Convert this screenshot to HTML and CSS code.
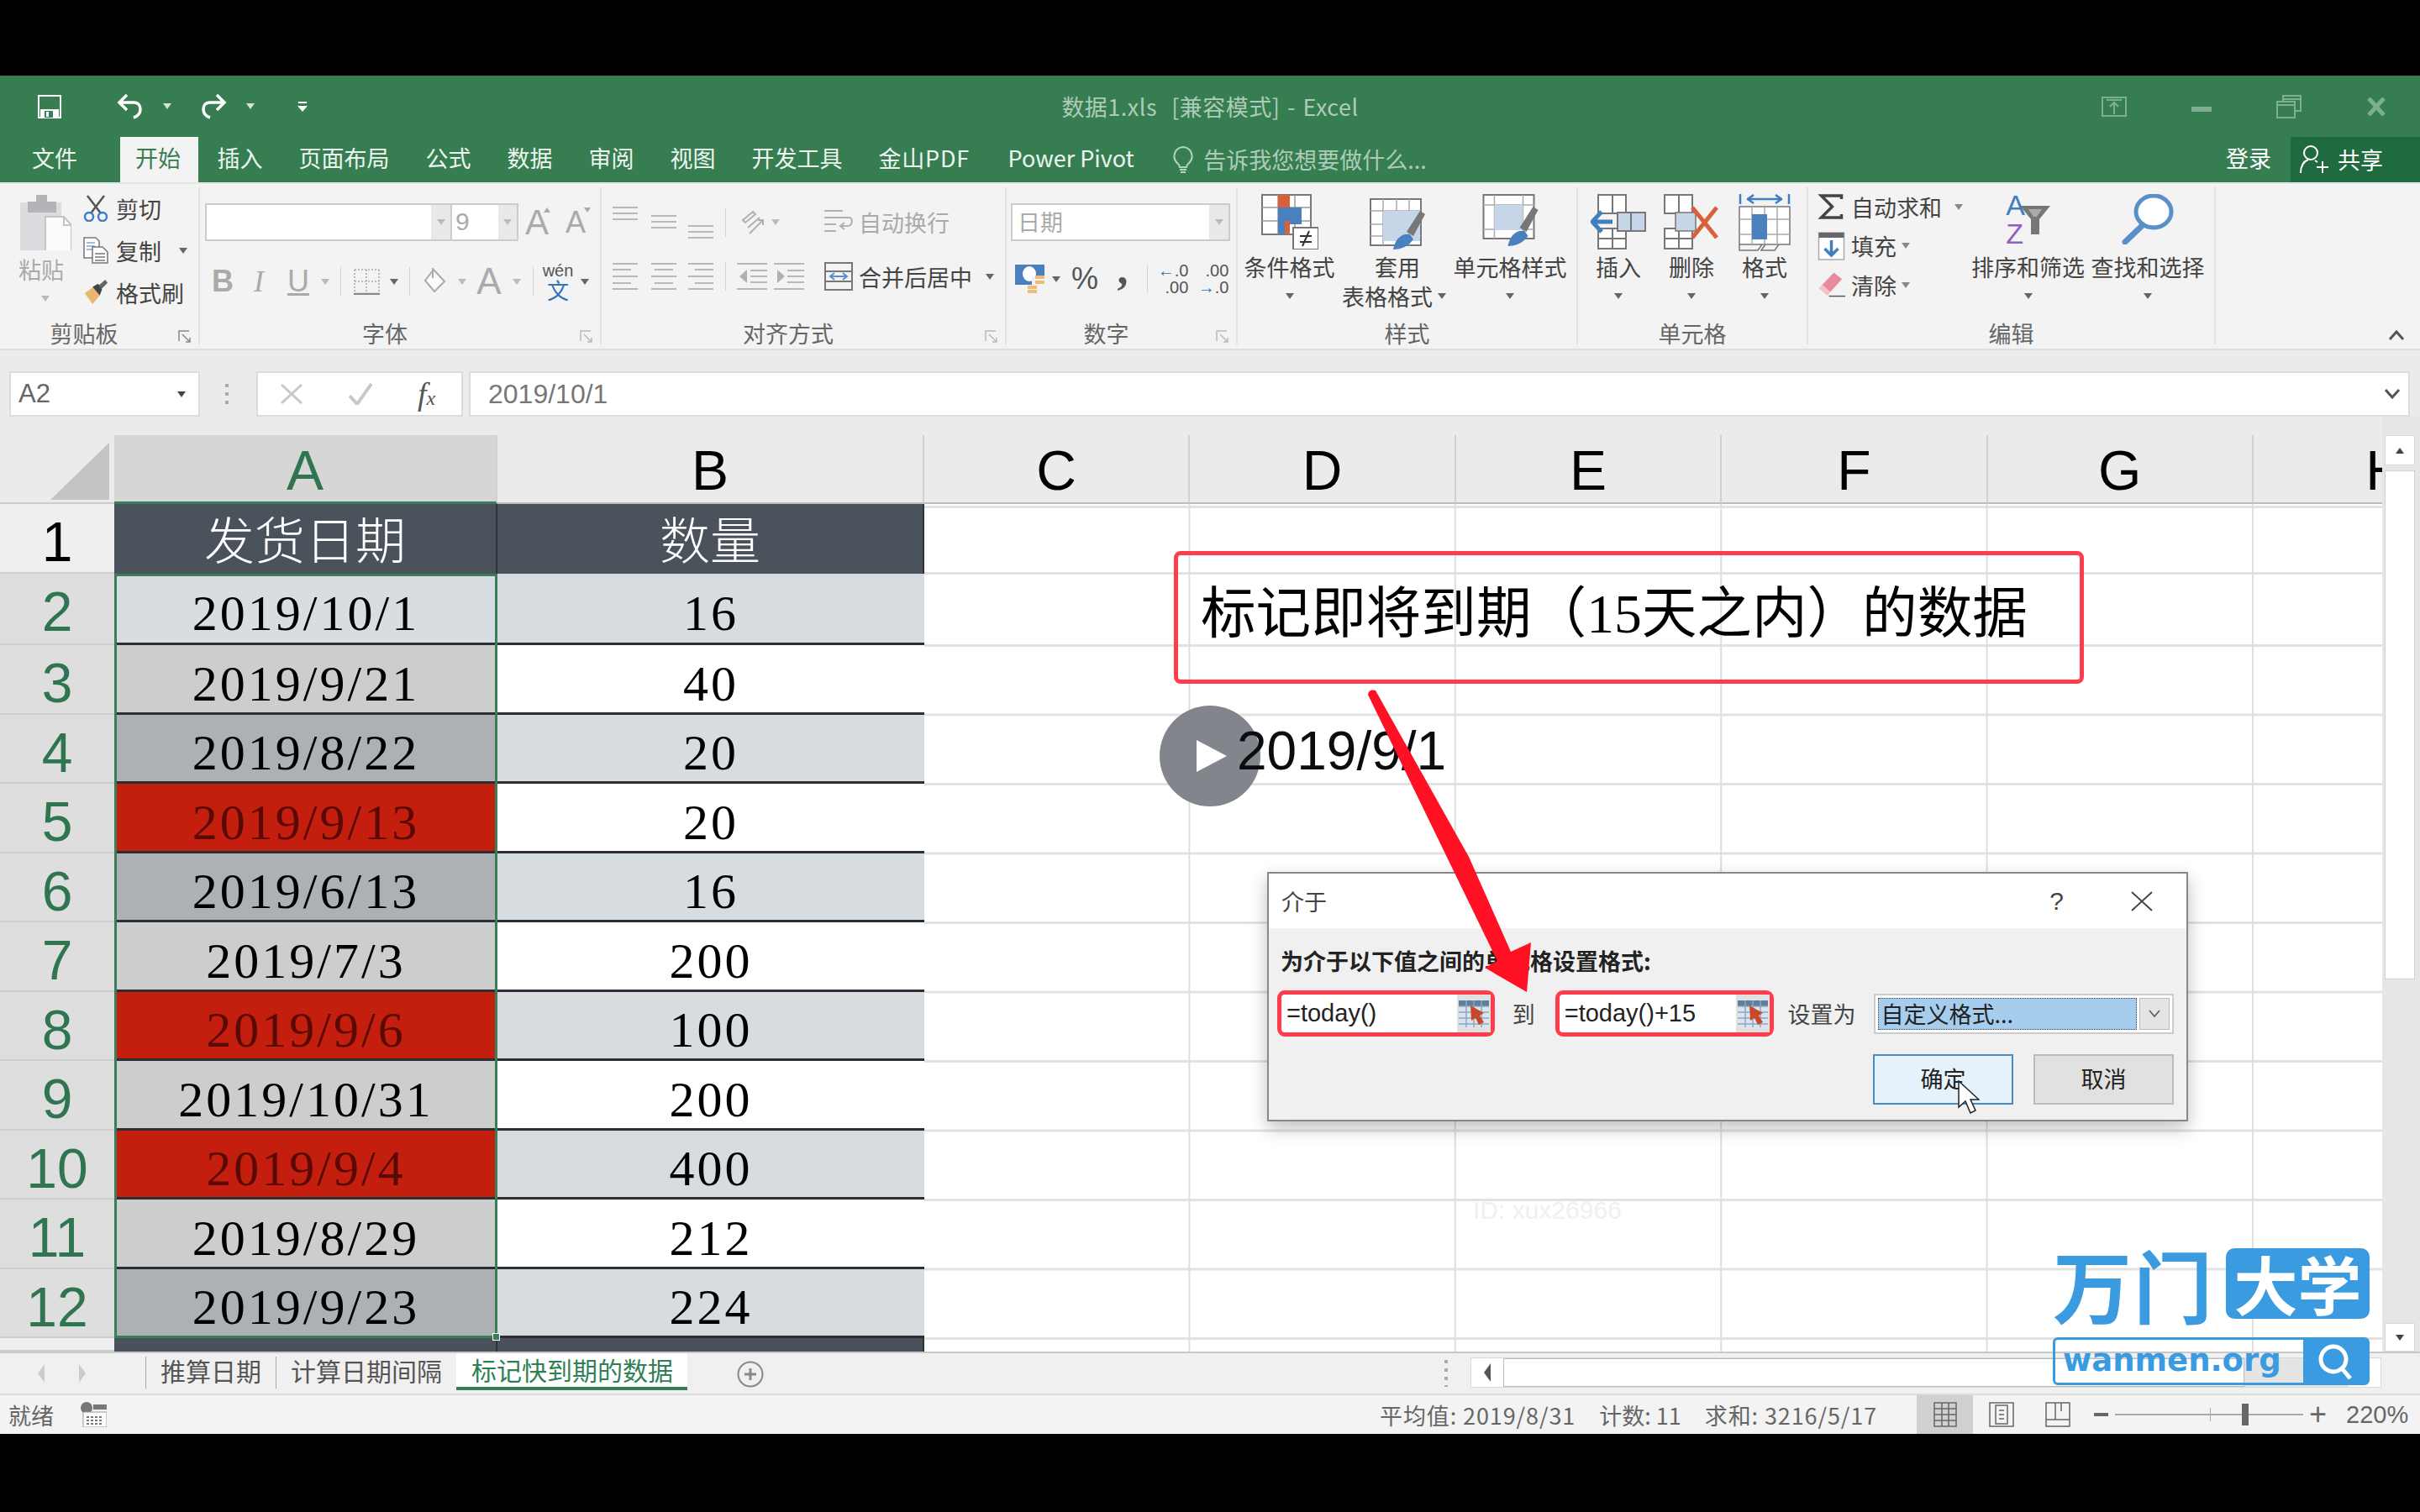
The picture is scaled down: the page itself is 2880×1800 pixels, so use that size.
FILE: index.html
```html
<!DOCTYPE html>
<html lang="zh-CN">
<head>
<meta charset="utf-8">
<title>数据1.xls [兼容模式] - Excel</title>
<link rel="stylesheet" href="styles.css">
</head>
<body>
<div class="screen">
<div class="app">

<header class="titlebar">
  <div class="title-row">
    <div class="qat">
      <svg width="28" height="28" viewBox="0 0 28 28"><path d="M1 1h26v26H1z" fill="none" stroke="#fff" stroke-width="2"/><path d="M3 17h22v9H3z" fill="#fff"/><path d="M8 19h10v8H8z" fill="#37805a"/><path d="M10 20h3v6h-3z" fill="#fff"/></svg>
      <svg class="end" width="32" height="30" viewBox="0 0 32 30"><path d="M4 10h16c6 0 8 4 8 8s-2 8-8 10" fill="none" stroke="#fff" stroke-width="3.5"/><path d="M12 1 3 10l9 9" fill="none" stroke="#fff" stroke-width="3.5"/></svg>
      <span class="caret light"></span>
      <svg class="end" width="34" height="30" viewBox="0 0 32 30"><path d="M28 10H12c-6 0-8 4-8 8s2 8 8 10" fill="none" stroke="#fff" stroke-width="3.5"/><path d="m20 1 9 9-9 9" fill="none" stroke="#fff" stroke-width="3.5"/></svg>
      <span class="caret light"></span>
      <svg width="12" height="12" viewBox="0 0 12 12"><path d="M1 0h10v2H1z" fill="#fff"/><path d="M0 5h12l-6 7z" fill="#fff"/></svg>
    </div>
    <div class="doc-title">数据1.xls&nbsp; [兼容模式] - Excel</div>
    <div class="win-btns">
      <svg width="30" height="24" viewBox="0 0 30 24"><path d="M1 1h28v22H1z" fill="none" stroke="#7fae93" stroke-width="2"/><path d="M6 4h18M15 21V7M10 12l5-5 5 5" fill="none" stroke="#7fae93" stroke-width="2"/></svg>
      <svg class="win-min" width="24" height="6" viewBox="0 0 24 6"><path d="M0 0h24v6H0z" fill="#7fae93"/></svg>
      <svg width="30" height="28" viewBox="0 0 30 28"><path d="M8 8V1h21v18h-7M1 8h21v19H1zM1 12h21M8 5h21" fill="none" stroke="#7fae93" stroke-width="2"/></svg>
      <svg width="22" height="22" viewBox="0 0 22 22"><path d="m2 1 18 20M20 1 2 21" fill="none" stroke="#7fae93" stroke-width="5"/></svg>
    </div>
  </div>
  <nav class="tab-row">
    <span class="tab file">文件</span>
    <span class="tab active">开始</span>
    <span class="tab">插入</span>
    <span class="tab">页面布局</span>
    <span class="tab">公式</span>
    <span class="tab">数据</span>
    <span class="tab">审阅</span>
    <span class="tab">视图</span>
    <span class="tab">开发工具</span>
    <span class="tab pdf">金山PDF</span>
    <span class="tab">Power Pivot</span>
    <span class="tell-me">
      <svg width="26" height="32" viewBox="0 0 26 32"><path d="M13 1a11 11 0 0 0-7 19c2 2 3 3 3 5h8c0-2 1-3 3-5A11 11 0 0 0 13 1z" fill="none" stroke="#b5d0c0" stroke-width="2"/><path d="M9 28h8M10 31h6" stroke="#b5d0c0" stroke-width="2"/></svg>
      <span>告诉我您想要做什么...</span>
    </span>
    <span class="login">登录</span>
    <span class="share">
      <svg width="35" height="36" viewBox="0 0 35 36"><circle cx="14" cy="10" r="8" fill="none" stroke="#fff" stroke-width="2"/><path d="M2 34c0-9 4-14 9-16M19 19l3 2M28 20v14M21 27h14" fill="none" stroke="#fff" stroke-width="2"/></svg>
      共享
    </span>
  </nav>
</header>

<section class="ribbon">
  <div class="group g-clip">
    <div class="group-body clip-body">
      <div class="paste">
        <svg width="61" height="66" viewBox="0 0 61 66"><path d="M0 9h49v57H0z" fill="#dcdce0"/><path d="M9 8h34v13H9zM19 0h13v9H19z" fill="#b4b4b8"/><path d="M30 26h22l9 10v31H30z" fill="#fbfbfb" stroke="#c4c4c4" stroke-width="2"/><path d="M52 26v10h9" fill="none" stroke="#c4c4c4" stroke-width="2"/></svg>
        <span class="lbl dim">粘贴</span>
        <span class="caret dimc paste-caret"></span>
      </div>
      <div class="stack clip-stack">
        <div class="stack-row"><svg class="ico-s" width="30" height="32" viewBox="0 0 30 32"><path d="M5 1l16 21M25 1 9 22" stroke="#555" stroke-width="2.5" fill="none"/><circle cx="7" cy="26" r="5" fill="none" stroke="#3f7fbf" stroke-width="2.5"/><circle cx="23" cy="26" r="5" fill="none" stroke="#3f7fbf" stroke-width="2.5"/></svg>剪切</div>
        <div class="stack-row"><svg class="ico-s" width="30" height="32" viewBox="0 0 30 32"><path d="M1 1h14l4 4v20H1z" fill="#fff" stroke="#777" stroke-width="1.5"/><path d="M4 7h10M4 11h10M4 15h10" stroke="#7fa6cf" stroke-width="1.5"/><path d="M11 12h12l6 6v13H11z" fill="#fff" stroke="#777" stroke-width="1.5"/><path d="M14 20h12M14 24h12M14 28h12" stroke="#777" stroke-width="1.5"/></svg>复制<span class="caret copy-caret"></span></div>
        <div class="stack-row"><svg class="ico-s" width="32" height="32" viewBox="0 0 32 32"><path d="M2 17 13 9l8 11-9 11z" fill="#e8b870"/><path d="M12 9l7-4 5 7-3 8z" fill="#444"/><path d="M20 7l8-7 3 4-8 8z" fill="#666"/></svg>格式刷</div>
      </div>
    </div>
    <div class="group-label with-launcher">剪贴板</div>
    <svg class="launcher" width="16" height="16" viewBox="0 0 16 16"><path d="M1 13V1h12M5 5l9 9M9 14h5V9" fill="none" stroke="#888" stroke-width="1.5"/></svg>
  </div>

  <div class="group g-font">
    <div class="group-body tool-body">
      <div class="tool-row">
        <div class="combo font-combo">
          <span class="combo-field font-name"></span><span class="combo-drop"><span class="caret dimc"></span></span>
          <span class="combo-field font-size">9</span><span class="combo-drop slim"><span class="caret dimc"></span></span>
        </div>
        <span class="az big-a">A<i class="up"></i></span>
        <span class="az small-a">A<i class="down"></i></span>
      </div>
      <div class="tool-grid font-tools">
        <span class="fmt b">B</span>
        <span class="fmt i">I</span>
        <span class="fmt u">U</span>
        <span class="caret dimc"></span>
        <span class="vsep"></span>
        <svg width="31" height="31" viewBox="0 0 31 31"><path d="M1 1h29M1 15h29M15 1v28M1 1v28M30 1v28" stroke="#aaa" stroke-width="1.5" stroke-dasharray="2 2" fill="none"/><path d="M0 30h31" stroke="#888" stroke-width="2.5"/></svg>
        <span class="caret"></span>
        <span class="vsep"></span>
        <svg width="30" height="34" viewBox="0 0 30 34"><path d="M13 3 3 16l11 13 12-12z" fill="#fbfbfb" stroke="#aaa" stroke-width="2"/><path d="M12 1v12" stroke="#aaa" stroke-width="2"/></svg>
        <span class="caret dimc"></span>
        <span class="fmt a">A</span>
        <span class="caret dimc"></span>
        <span class="vsep"></span>
        <span class="wen">wén<b>文</b></span>
        <span class="caret"></span>
      </div>
    </div>
    <div class="group-label with-launcher">字体</div>
    <svg class="launcher" width="16" height="16" viewBox="0 0 16 16"><path d="M1 13V1h12M5 5l9 9M9 14h5V9" fill="none" stroke="#bbb" stroke-width="1.5"/></svg>
  </div>

  <div class="group g-align">
    <div class="group-body tool-body">
      <div class="tool-grid align-row1">
        <svg width="30" height="40" viewBox="0 0 30 40"><path d="M0 2h30M0 9h30M0 16h30" stroke="#b8b8b8" stroke-width="2"/></svg>
        <svg width="30" height="40" viewBox="0 0 30 40"><path d="M0 12h30M0 19h30M0 26h30" stroke="#b8b8b8" stroke-width="2"/></svg>
        <svg width="30" height="40" viewBox="0 0 30 40"><path d="M0 24h30M0 31h30M0 38h30" stroke="#b8b8b8" stroke-width="2"/></svg>
        <span class="vsep"></span>
        <svg width="30" height="30" viewBox="0 0 30 30"><path d="M4 12 16 2l3 3-12 10zM10 21 24 9M12 28 28 12M22 12h6v6" fill="none" stroke="#b0b0b0" stroke-width="2"/></svg>
        <span class="caret dimc"></span>
        <span></span>
        <svg width="34" height="34" viewBox="0 0 34 34"><path d="M0 3h22M0 11h30c4 0 4 10-2 10h-8M0 19h14M0 27h14M24 17l-5 4 5 4" fill="none" stroke="#b0b0b0" stroke-width="2"/></svg>
        <span class="lbl dim row-text">自动换行</span>
      </div>
      <div class="tool-grid align-row2">
        <svg width="30" height="32" viewBox="0 0 30 32"><path d="M0 1h30M0 8h22M0 16h30M0 24h22M0 31h30" stroke="#b8b8b8" stroke-width="2"/></svg>
        <svg width="30" height="32" viewBox="0 0 30 32"><path d="M0 1h30M4 8h22M0 16h30M4 24h22M0 31h30" stroke="#b8b8b8" stroke-width="2"/></svg>
        <svg width="30" height="32" viewBox="0 0 30 32"><path d="M0 1h30M8 8h22M0 16h30M8 24h22M0 31h30" stroke="#b8b8b8" stroke-width="2"/></svg>
        <span class="vsep"></span>
        <svg width="36" height="32" viewBox="0 0 36 32"><path d="M0 1h36M16 9h20M16 16h20M16 23h20M0 31h36" stroke="#b8b8b8" stroke-width="2"/><path d="M12 8 3 16l9 8z" fill="#b0b0b0"/></svg>
        <svg width="36" height="32" viewBox="0 0 36 32"><path d="M0 1h36M16 9h20M16 16h20M16 23h20M0 31h36" stroke="#b8b8b8" stroke-width="2"/><path d="M4 8l9 8-9 8z" fill="#b0b0b0"/></svg>
        <span></span>
        <svg width="34" height="34" viewBox="0 0 34 34"><path d="M1 1h32v32H1zM1 11h32M1 23h32" fill="none" stroke="#777" stroke-width="2"/><path d="M8 17h18M12 13l-5 4 5 4M22 13l5 4-5 4" fill="none" stroke="#5b8fc7" stroke-width="2"/></svg>
        <span class="lbl row-text">合并后居中</span>
        <span class="caret merge-caret"></span>
      </div>
    </div>
    <div class="group-label with-launcher">对齐方式</div>
    <svg class="launcher" width="16" height="16" viewBox="0 0 16 16"><path d="M1 13V1h12M5 5l9 9M9 14h5V9" fill="none" stroke="#bbb" stroke-width="1.5"/></svg>
  </div>

  <div class="group g-num">
    <div class="group-body tool-body">
      <div class="tool-row">
        <div class="combo num-combo"><span class="combo-field num-name">日期</span><span class="combo-drop"><span class="caret dimc"></span></span></div>
      </div>
      <div class="tool-grid num-tools">
        <svg width="35" height="34" viewBox="0 0 35 34"><path d="M0 0h35v24H0z" fill="#4a80bd"/><ellipse cx="17" cy="11" rx="8" ry="9" fill="#fff"/><path d="M20 14h15v20H20z" fill="#f3f3f3"/><path d="M24 15h11M24 21h11M15 27h11M15 32h11" stroke="#eebc79" stroke-width="4"/></svg>
        <span class="caret"></span>
        <span class="pct">%</span>
        <span class="comma">,</span>
        <span class="vsep"></span>
        <span class="dec"><span><i class="blue">←</i>.0</span><span>.00</span></span>
        <span class="dec"><span>.00</span><span><i class="blue">→</i>.0</span></span>
      </div>
    </div>
    <div class="group-label with-launcher">数字</div>
    <svg class="launcher" width="16" height="16" viewBox="0 0 16 16"><path d="M1 13V1h12M5 5l9 9M9 14h5V9" fill="none" stroke="#bbb" stroke-width="1.5"/></svg>
  </div>

  <div class="group g-style">
    <div class="group-body big-row">
      <div class="big w123">
        <div class="big-ico"><svg width="68" height="66" viewBox="0 0 68 66"><path d="M1 1h58v47H1z" fill="#fff" stroke="#777" stroke-width="2"/><path d="M1 16h58M1 32h58M20 1v47M40 1v47" stroke="#999" stroke-width="1.5"/><path d="M20 1h14v20H20z" fill="#d9613a"/><path d="M20 16h28v20H20z" fill="#4a80bd"/><path d="M20 32h14v16H20z" fill="#d9613a"/><path d="M20 32h8v16h-8z" fill="#4a80bd"/><path d="M38 40h30v26H38z" fill="#fff" stroke="#777" stroke-width="2"/><path d="M46 50h14M46 57h14M57 44l-8 18" stroke="#333" stroke-width="2"/></svg></div>
        <div class="big-txt">条件格式</div>
        <div class="big-sub"><span class="caret"></span></div>
      </div>
      <div class="big w134">
        <div class="big-ico"><svg width="66" height="66" viewBox="0 0 66 66"><path d="M1 6h60v55H1z" fill="#fff" stroke="#777" stroke-width="2"/><path d="M1 20h60M1 36h60M1 50h60M16 6v55M32 6v55M47 6v55" stroke="#aaa" stroke-width="1.5"/><path d="M16 20h44v36H16z" fill="#c7d5e8"/><path d="M44 45 60 20l6 4-14 26z" fill="#777"/><path d="M28 66c2-12 10-20 20-18l4 6c-6 8-14 12-24 12z" fill="#4a80bd"/></svg></div>
        <div class="big-txt">套用</div>
        <div class="big-sub nudge">表格格式<span class="caret sub-caret"></span></div>
      </div>
      <div class="big w134">
        <div class="big-ico"><svg width="67" height="66" viewBox="0 0 66 66"><path d="M1 1h60v52H1z" fill="#fff" stroke="#777" stroke-width="2"/><path d="M1 13h60M14 1v52M48 1v52M1 42h60" stroke="#aaa" stroke-width="1.5"/><path d="M14 13h34v30H14z" fill="#c7d5e8"/><path d="M44 40 60 15l6 4-14 26z" fill="#777"/><path d="M30 62c2-12 10-20 20-18l4 6c-6 8-14 12-24 12z" fill="#4a80bd"/></svg></div>
        <div class="big-txt">单元格样式</div>
        <div class="big-sub"><span class="caret"></span></div>
      </div>
    </div>
    <div class="group-label">样式</div>
  </div>

  <div class="group g-cells">
    <div class="group-body big-row cells-body">
      <div class="big w88">
        <div class="big-ico"><svg width="66" height="66" viewBox="0 0 66 66"><path d="M9 1h33v22H9zM26 1v22M9 41h33v24H9zM26 41v24M9 53h33" fill="#fff" stroke="#777" stroke-width="2"/><path d="M32 22h33v22H32zM48 22v22" fill="#c7d5e8" stroke="#777" stroke-width="2"/><path d="M26 33H4M13 21 2 33l11 12" fill="none" stroke="#3f7fbf" stroke-width="5"/></svg></div>
        <div class="big-txt">插入</div>
        <div class="big-sub"><span class="caret"></span></div>
      </div>
      <div class="big w86">
        <div class="big-ico"><svg width="66" height="66" viewBox="0 0 66 66"><path d="M1 1h33v22H1zM18 1v22M1 41h33v24H1zM18 41v24M1 53h33" fill="#fff" stroke="#777" stroke-width="2"/><path d="M14 22h24v22H14z" fill="#c7d5e8" stroke="#777" stroke-width="1.5"/><path d="M63 16 34 52M34 16l29 36" fill="none" stroke="#d9613a" stroke-width="5"/></svg></div>
        <div class="big-txt">删除</div>
        <div class="big-sub"><span class="caret"></span></div>
      </div>
      <div class="big w88">
        <div class="big-ico"><svg width="62" height="68" viewBox="0 0 62 68"><path d="M2 0v12M60 0v12M10 6h42M18 1l-7 5 7 5M44 1l7 5-7 5" fill="none" stroke="#3f7fbf" stroke-width="2.5"/><path d="M1 15h60v45H1z" fill="#fff" stroke="#777" stroke-width="1.5"/><path d="M16 15v45M46 15v45M1 30h60M1 48h60M31 15v45" stroke="#aaa" stroke-width="1.5"/><path d="M16 24h18v30H16z" fill="#4a80bd"/><path d="M1 60v7h22l5-7M32 60l-5 7h16l5-7" fill="none" stroke="#777" stroke-width="1.5"/></svg></div>
        <div class="big-txt">格式</div>
        <div class="big-sub"><span class="caret"></span></div>
      </div>
    </div>
    <div class="group-label">单元格</div>
  </div>

  <div class="group g-edit">
    <div class="group-body big-row">
      <div class="stack edit-stack">
        <div class="edit-row"><svg class="edit-ico" width="30" height="30" viewBox="0 0 30 30"><path d="M27 6V2H3l13 13L3 28h24v-4" fill="none" stroke="#444" stroke-width="3.5"/></svg>自动求和<span class="caret sum-caret dimc2"></span></div>
        <div class="edit-row"><svg class="edit-ico" width="32" height="34" viewBox="0 0 32 34"><path d="M1 1h30v32H1z" fill="#fff" stroke="#aaa" stroke-width="1.5"/><path d="M1 1h30v6H1z" fill="#666"/><path d="M16 10v18M8 20l8 8 8-8" fill="none" stroke="#3f7fbf" stroke-width="3.5"/></svg>填充<span class="caret dimc2 fill-caret"></span></div>
        <div class="edit-row"><svg class="edit-ico" width="34" height="30" viewBox="0 0 34 30"><path d="M2 19 20 0l10 8-18 20z" fill="#e88b9d"/><path d="M2 19l10 9 4-4-10-9z" fill="#f6c3cc"/><path d="M14 29h20" stroke="#555" stroke-width="1.5"/></svg>清除<span class="caret dimc2 fill-caret"></span></div>
      </div>
      <div class="big w141">
        <div class="big-ico sort-ico"><span class="az-sort"><i class="sa">A</i><i class="sz">Z</i></span><svg class="funnel" width="36" height="34" viewBox="0 0 36 34"><path d="M0 0h36L23 16v18h-10V16z" fill="#777"/><path d="M10 4h16L20 13h-4z" fill="#aaa"/></svg></div>
        <div class="big-txt">排序和筛选</div>
        <div class="big-sub"><span class="caret"></span></div>
      </div>
      <div class="big w144">
        <div class="big-ico"><svg width="62" height="60" viewBox="0 0 62 60"><ellipse cx="38" cy="21" rx="21" ry="19" fill="#fff" stroke="#5b8fc7" stroke-width="5"/><path d="M25 37 4 57" stroke="#5b8fc7" stroke-width="7" stroke-linecap="round"/></svg></div>
        <div class="big-txt">查找和选择</div>
        <div class="big-sub"><span class="caret"></span></div>
      </div>
    </div>
    <div class="group-label">编辑</div>
  </div>

  <div class="ribbon-end">
    <svg width="19" height="12" viewBox="0 0 19 12"><path d="m1 11 8-9 8 9" fill="none" stroke="#555" stroke-width="3"/></svg>
  </div>
</section>

<section class="formula">
  <div class="namebox"><span>A2</span><span class="caret dark"></span></div>
  <div class="fdots"></div>
  <div class="fx-box">
    <svg width="26" height="24" viewBox="0 0 26 24"><path d="m1 1 24 22M25 1 1 23" stroke="#c8c8c8" stroke-width="3"/></svg>
    <svg width="28" height="26" viewBox="0 0 28 26"><path d="m1 15 9 10L27 1" fill="none" stroke="#c8c8c8" stroke-width="4"/></svg>
    <span class="fx">f<small>x</small></span>
  </div>
  <div class="finput"><span>2019/10/1</span><svg width="19" height="12" viewBox="0 0 19 12"><path d="m1 1 8 9 8-9" fill="none" stroke="#555" stroke-width="3"/></svg></div>
</section>

<section class="sheet">
  <div class="grid-wrap">
    <div class="grid">
      <div class="corner"><svg width="70" height="68" viewBox="0 0 70 68"><path d="M70 0v68H0z" fill="#c4c4c4"/></svg></div>
      <div class="ch sel">A</div><div class="ch">B</div><div class="ch">C</div><div class="ch">D</div><div class="ch">E</div><div class="ch">F</div><div class="ch">G</div><div class="ch">H</div>

      <div class="rh top">1</div><div class="thd">发货日期</div><div class="thd">数量</div>
      <div class="rh">2</div><div class="td a-active">2019/10/1</div><div class="td b-band">16</div>
      <div class="rh">3</div><div class="td a-light">2019/9/21</div><div class="td b-white">40</div>
      <div class="rh">4</div><div class="td a-dark">2019/8/22</div><div class="td b-band">20</div>
      <div class="rh">5</div><div class="td a-red">2019/9/13</div><div class="td b-white">20</div>
      <div class="rh">6</div><div class="td a-dark">2019/6/13</div><div class="td b-band">16</div>
      <div class="rh">7</div><div class="td a-light">2019/7/3</div><div class="td b-white">200</div>
      <div class="rh">8</div><div class="td a-red">2019/9/6</div><div class="td b-band">100</div>
      <div class="rh">9</div><div class="td a-light">2019/10/31</div><div class="td b-white">200</div>
      <div class="rh">10</div><div class="td a-red">2019/9/4</div><div class="td b-band">400</div>
      <div class="rh">11</div><div class="td a-light">2019/8/29</div><div class="td b-white">212</div>
      <div class="rh">12</div><div class="td a-dark">2019/9/23</div><div class="td b-band">224</div>
      <div class="rh top"></div><div class="tfoot"></div><div class="tfoot"></div>

      <div class="selection"><span class="handle"></span></div>
    </div>
  </div>
  <div class="vscroll">
    <div class="sb-btn"><span class="caret dark up-caret"></span></div>
    <div class="sb-thumb"></div>
    <div class="sb-btn end"><span class="caret dark"></span></div>
  </div>
</section>

<section class="sheetbar">
  <div class="sheet-nav"><i class="nav-l"></i><i class="nav-r"></i></div>
  <span class="s-tab first">推算日期</span>
  <span class="s-tab">计算日期间隔</span>
  <span class="s-tab current">标记快到期的数据</span>
  <svg class="s-add" width="32" height="32" viewBox="0 0 32 32"><circle cx="16" cy="16" r="14.5" fill="none" stroke="#888" stroke-width="2"/><path d="M16 9v14M9 16h14" stroke="#888" stroke-width="3"/></svg>
  <div class="s-dots"></div>
  <div class="hscroll">
    <div class="hs-btn"><i class="nav-l dark"></i></div>
    <div class="hs-thumb"></div>
    <div class="hs-btn right"><i class="nav-r dark"></i></div>
  </div>
</section>

<footer class="status">
  <span class="ready">就绪</span>
  <svg width="32" height="30" viewBox="0 0 32 30"><circle cx="8" cy="7" r="7" fill="#777"/><path d="M16 3h16v6H16z" fill="#777"/><path d="M4 12h28v18H4z" fill="#fff" stroke="#999"/><path d="M8 18h20M8 22h20M8 26h20" stroke="#777" stroke-width="2" stroke-dasharray="3 2"/></svg>
  <div class="stats"><span>平均值: 2019/8/31</span><span class="stat-count">计数: 11</span><span>求和: 3216/5/17</span></div>
  <div class="view-btns">
    <span class="vb on"><svg width="28" height="30" viewBox="0 0 28 30"><path d="M1 1h26v28H1zM1 8h26M1 15h26M1 22h26M10 1v28M18 1v28" fill="none" stroke="#666" stroke-width="1.5"/></svg></span>
    <span class="vb"><svg width="30" height="30" viewBox="0 0 30 30"><path d="M1 1h28v28H1z" fill="none" stroke="#666" stroke-width="1.5"/><path d="M8 4h14v22H8zM12 10h6M12 15h6M12 20h6" fill="none" stroke="#666" stroke-width="1.5"/></svg></span>
    <span class="vb"><svg width="30" height="30" viewBox="0 0 30 30"><path d="M1 1h28v28H1zM1 21h28M12 1v20M19 1v10" fill="none" stroke="#666" stroke-width="1.5"/></svg></span>
  </div>
  <div class="zoom-ctl">
    <i class="z-minus"></i>
    <div class="z-track"><i class="z-tick"></i><i class="z-thumb"></i></div>
    <span class="z-plus">+</span>
    <span class="z-val">220%</span>
  </div>
</footer>
</div>

<div class="note-text">2019/9/1</div>
<div class="play"><svg width="36" height="38" viewBox="0 0 36 38"><path d="M0 0l36 19L0 38z" fill="#fff"/></svg></div>
<div class="note-box">标记即将到期（15天之内）的数据</div>
<div class="watermark">ID: xux26966</div>

<div class="dialog">
  <div class="dlg-title"><span>介于</span><span class="dlg-help">?</span>
    <svg width="26" height="24" viewBox="0 0 26 24"><path d="m1 1 24 22M25 1 1 23" stroke="#444" stroke-width="2"/></svg>
  </div>
  <div class="dlg-body">
    <div class="dlg-label">为介于以下值之间的单元格设置格式:</div>
    <div class="dlg-row">
      <div class="ref-box first">
        <span class="ref-text">=today()</span>
        <span class="ref-btn"><svg width="36" height="32" viewBox="0 0 36 32"><path d="M0 0h36v32H0z" fill="#dbe4ee"/><path d="M0 0h36v7H0z" fill="#5f7f9f"/><path d="M0 7h36M0 14h36M0 21h36M0 28h36M9 0v32M18 0v32M27 0v32" stroke="#8fa7bf" stroke-width="1.5"/><path d="M14 6l16 9-5 3 5 8-6 3-4-8-5 3z" fill="#c8492a"/></svg></span>
      </div>
      <span class="dlg-to">到</span>
      <div class="ref-box second">
        <span class="ref-text">=today()+15</span>
        <span class="ref-btn"><svg width="36" height="32" viewBox="0 0 36 32"><path d="M0 0h36v32H0z" fill="#dbe4ee"/><path d="M0 0h36v7H0z" fill="#5f7f9f"/><path d="M0 7h36M0 14h36M0 21h36M0 28h36M9 0v32M18 0v32M27 0v32" stroke="#8fa7bf" stroke-width="1.5"/><path d="M14 6l16 9-5 3 5 8-6 3-4-8-5 3z" fill="#c8492a"/></svg></span>
      </div>
      <span class="dlg-set">设置为</span>
      <div class="dlg-select">
        <span class="sel-text">自定义格式...</span>
        <span class="sel-drop"><svg width="14" height="10" viewBox="0 0 14 10"><path d="m1 1 6 7 6-7" fill="none" stroke="#555" stroke-width="1.5"/></svg></span>
      </div>
    </div>
    <div class="dlg-actions">
      <span class="btn primary">确定</span>
      <span class="btn">取消</span>
    </div>
  </div>
</div>

<svg class="red-arrow" width="240" height="400" viewBox="1600 800 240 400"><path d="M1628 827q1-7 9-5L1748 1020 1798 1133l24-11-5 59-50-29 15-8z" fill="#ff1023"/></svg>
<svg class="cursor" width="26" height="40" viewBox="0 0 26 40"><path d="M1 1v31l8-7 6 14 6-3-6-13h10z" fill="#fff" stroke="#222" stroke-width="1.5"/></svg>

<div class="logo">
  <div class="logo-top"><span class="logo-wm">万门</span><span class="logo-uni">大学</span></div>
  <div class="logo-search"><span class="logo-url">wanmen.org</span><span class="logo-btn"><svg width="42" height="44" viewBox="0 0 42 44"><circle cx="19" cy="19" r="15" fill="none" stroke="#fff" stroke-width="5"/><path d="m29 30 10 12" stroke="#fff" stroke-width="5"/></svg></span></div>
</div>
</div>
</body>
</html>
```

FILE: styles.css
```css
* { box-sizing: border-box; }
html, body { margin: 0; padding: 0; background: #000; }
body {
  font-family: "Noto Sans CJK SC", "Liberation Sans", sans-serif;
  font-size: 27px;
  color: #444;
  overflow: hidden;
}
svg { display: block; flex: none; }
i { font-style: normal; }
.screen { position: relative; width: 2880px; height: 1800px; padding-top: 90px; overflow: hidden; }
.app { width: 2880px; display: flex; flex-direction: column; }

/* carets */
.caret { display: inline-block; width: 0; height: 0; border-left: 5px solid transparent; border-right: 5px solid transparent; border-top: 7px solid #666; flex: none; }
.caret.light { border-top-color: #d5e3da; }
.caret.dimc { border-top-color: #bbb; }
.caret.dimc2 { border-top-color: #888; }
.caret.dark { border-top-color: #444; }

/* title bar */
.titlebar { background: #367e52; height: 127px; display: flex; flex-direction: column; }
.title-row { height: 73px; display: grid; grid-template-columns: 1fr auto 1fr; align-items: center; }
.qat { display: grid; grid-template-columns: 28px 98px 56px 44px 54px 70px; align-items: center; justify-items: center; padding-left: 45px; justify-self: start; }
.qat .end { justify-self: end; }
.doc-title { color: #aecbb9; line-height: 30px; word-spacing: 2px; letter-spacing: .5px; }
.win-btns { display: grid; grid-template-columns: repeat(4, 104px); justify-items: center; align-items: center; justify-self: end; }
.win-min { margin-top: 6px; }
.tab-row { display: flex; height: 54px; align-items: stretch; color: #eef5f0; line-height: 50px; }
.tab { padding: 0 21.5px; white-space: nowrap; }
.tab.file { padding: 0 47px 0 38px; margin-right: 4px; }
.tab.active { background: #f3f3f3; color: #367e52; padding: 0 21px 0 18px; margin-right: 1px; }
.tab.pdf { letter-spacing: .8px; padding-right: 24px; }
.tell-me { display: flex; align-items: center; gap: 11px; margin-left: 24px; color: #aecbb9; white-space: nowrap; }
.login { margin-left: auto; padding-right: 23px; color: #fff; }
.share { width: 154px; background: #1f6a3f; color: #fff; display: flex; align-items: center; gap: 11px; padding-left: 10px; }

/* ribbon */
.ribbon { height: 200px; background: #f3f3f3; border-top: 2px solid #dfe8e2; border-bottom: 2px solid #dedede; display: flex; padding-top: 4px; }
.group { position: relative; height: 187px; border-right: 2px solid #e2e2e2; display: flex; flex-direction: column; flex: none; }
.group-body { height: 162px; }
.group-label { height: 25px; line-height: 24px; text-align: center; color: #666; }
.group-label.with-launcher { padding-right: 36px; }
.launcher { position: absolute; right: 8px; top: 170px; }
.g-clip { width: 238px; }
.g-font { width: 478px; }
.g-align { width: 482px; }
.g-num { width: 275px; }
.g-style { width: 405px; }
.g-cells { width: 274px; }
.g-edit { width: 485px; }
.ribbon-end { flex: 1; display: flex; justify-content: flex-end; align-items: flex-end; padding: 0 18px 5px 0; height: 187px; }

.clip-body { display: flex; padding-left: 22px; }
.paste { width: 77px; padding-top: 9px; display: flex; flex-direction: column; align-items: flex-start; }
.paste svg { margin-left: 2px; }
.lbl { line-height: 27px; white-space: nowrap; }
.lbl.dim { color: #aaa; }
.paste .lbl { margin-top: 9px; }
.paste-caret { margin: 18px 0 0 27px; }
.stack { display: flex; flex-direction: column; }
.stack-row { height: 50px; display: flex; align-items: center; gap: 9px; white-space: nowrap; }
.ico-s { width: 30px; }
.copy-caret { margin-left: 12px; }

.tool-body { display: flex; flex-direction: column; padding-top: 19px; }
.tool-row { height: 45px; display: flex; align-items: center; margin-left: 6px; }
.tool-grid { display: grid; align-items: center; justify-items: center; justify-content: start; height: 34px; margin-top: 25px; }
.combo { display: flex; height: 45px; border: 2px solid #ccc; background: #fff; align-items: stretch; }
.font-combo { width: 373px; }
.combo-field { display: block; color: #aaa; line-height: 40px; }
.font-name { width: 267px; }
.font-size { width: 57px; padding-left: 4px; background: #fff; border-left: 2px solid #ccc; font-family: "Liberation Sans", sans-serif; font-size: 30px; }
.combo-drop { width: 23px; background: #e9e9e9; display: flex; align-items: center; justify-content: center; }
.combo-drop.slim { width: 22px; }
.az { position: relative; display: block; font-family: "Liberation Sans", sans-serif; color: #aaa; line-height: 36px; }
.big-a { font-size: 42px; margin-left: 8px; width: 48px; }
.small-a { font-size: 36px; width: 30px; }
.az i { position: absolute; top: 0; width: 0; height: 0; border-left: 4px solid transparent; border-right: 4px solid transparent; }
.az .up { left: 22px; border-bottom: 6px solid #aaa; }
.az .down { left: 22px; top: 0; border-top: 6px solid #aaa; }
.font-tools { margin-left: 6px; grid-template-columns: 42px 44px 50px 14px 22px 40px 26px 10px 52px 12px 52px 14px 24px 36px 28px; }
.fmt { font-family: "Liberation Sans", sans-serif; font-size: 36px; color: #aaa; line-height: 34px; }
.fmt.b { font-weight: 700; }
.fmt.i { font-style: italic; font-family: "Liberation Serif", serif; }
.fmt.u { text-decoration: underline; text-underline-offset: 2px; }
.fmt.a { font-size: 44px; }
.vsep { width: 1px; height: 34px; background: #d4d4d4; }
.wen { display: flex; flex-direction: column; align-items: center; font-family: "Liberation Sans", sans-serif; font-size: 20px; line-height: 20px; color: #555; }
.wen b { font-family: "Noto Sans CJK SC", sans-serif; font-weight: 400; font-size: 26px; line-height: 26px; color: #2f74b5; }

.align-row1 { grid-template-columns: 44px 48px 40px 18px 46px 10px 52px 36px auto; margin: 0 0 0 6px; height: 45px; }
.align-row2 { grid-template-columns: 44px 48px 40px 18px 46px 42px 20px 36px auto auto; margin: 25px 0 0 6px; }
.row-text { margin-left: 6px; }
.merge-caret { margin-left: 16px; }

.num-combo { width: 261px; margin-left: -1px; }
.num-name { flex: 1; padding-left: 6px; }
.num-tools { margin-left: 5px; grid-template-columns: 44px 20px 48px 42px 16px 46px 50px; }
.pct { font-family: "Liberation Sans", sans-serif; font-size: 36px; color: #555; line-height: 34px; }
.comma { font-family: "Liberation Serif", serif; font-weight: 700; font-size: 52px; line-height: 34px; color: #555; margin-top: -22px; }
.dec { display: flex; flex-direction: column; font-family: "Liberation Sans", sans-serif; font-size: 20px; line-height: 20px; color: #555; text-align: right; }
.blue { color: #2f74b5; font-weight: 700; }

.big-row { display: flex; }
.big { display: flex; flex-direction: column; align-items: center; flex: none; white-space: nowrap; }
.w123 { width: 123px; } .w134 { width: 134px; } .w88 { width: 88px; } .w86 { width: 86px; } .w141 { width: 141px; } .w144 { width: 144px; }
.big-ico { height: 81px; padding-top: 8px; display: flex; justify-content: center; }
.big-txt { height: 27px; line-height: 27px; }
.big-sub { height: 27px; line-height: 27px; margin-top: 8px; display: flex; align-items: center; }
.big-sub.nudge { margin-right: 8px; }
.sub-caret { margin-left: 6px; }
.cells-body { padding-left: 4px; }
.edit-stack { width: 191px; padding: 0 0 0 11px; }
.edit-row { height: 46.5px; display: flex; align-items: center; white-space: nowrap; }
.edit-ico { margin-right: 7px; width: 33px; }
.sum-caret { margin-left: 15px; }
.fill-caret { margin-left: 6px; }
.az-sort { display: flex; flex-direction: column; font-family: "Liberation Sans", sans-serif; font-size: 34px; line-height: 34px; margin: -4px -6px 0 0; }
.funnel { margin-top: 14px; }
.sa { color: #3f7fbf; }
.sz { color: #9060c0; }

/* formula bar */
.formula { height: 79px; background: #ebebeb; display: flex; padding: 25px 12px 0 11px; align-items: flex-start; }
.namebox { width: 227px; height: 54px; background: #fff; border: 2px solid #dcdcdc; display: flex; align-items: center; justify-content: space-between; padding: 0 15px 0 9px; color: #666; font-family: "Liberation Sans", sans-serif; font-size: 31px; }
.fdots { width: 4px; height: 24px; margin: 15px 33px 0 30px; background: repeating-linear-gradient(to bottom, #aaa 0 4px, transparent 4px 10px); }
.fx-box { width: 246px; height: 54px; background: #fff; border: 2px solid #dcdcdc; display: flex; align-items: center; padding-left: 27px; }
.fx-box svg:nth-child(2) { margin-left: 55px; }
.fx { margin-left: 54px; font-family: "Liberation Serif", serif; font-style: italic; font-size: 38px; color: #555; }
.fx small { font-size: 24px; }
.finput { flex: 1; margin-left: 7px; height: 54px; background: #fff; border: 2px solid #dcdcdc; display: flex; align-items: center; justify-content: space-between; padding: 0 9px 0 21px; font-family: "Liberation Sans", sans-serif; font-size: 32px; color: #777; }

/* sheet */
.sheet { height: 1113px; display: flex; background: #ebebeb; }
.grid-wrap { width: 2835px; padding-top: 22px; overflow: hidden; flex: none; }
.grid {
  position: relative;
  width: 2835px;
  height: 1091px;
  display: grid;
  grid-template-columns: 136px 456px 508px repeat(6, 316.4px);
  grid-template-rows: 82px 83px 85px repeat(10, 82.5px) 1fr;
  background-color: #fff;
  background-image:
    linear-gradient(to right, #dedede 2px, transparent 2px),
    linear-gradient(to bottom, #e2e2e2 3px, transparent 3px),
    linear-gradient(#fff, #fff),
    linear-gradient(to bottom, #e2e2e2 3px, transparent 3px);
  background-size: 316.4px 100%, 100% 3px, 100% 7px, 100% 82.5px;
  background-repeat: repeat, no-repeat, no-repeat, repeat;
  background-position: 1098px 0, 0 163px, 0 166px, 0 166.5px;
}
.corner { background: #ebebeb; padding: 9px 0 0 60px; border-bottom: 2px solid #ccc; }
.ch { background: #ebebeb; border-right: 2px solid #d0d0d0; border-bottom: 2px solid #bdbdbd; color: #000; font-family: "Liberation Sans", sans-serif; font-size: 66px; line-height: 85px; text-align: center; }
.ch.sel { background: #d6d6d6; color: #2f7550; border-bottom: 3px solid #3a7d58; }
.ch:last-child { border-right: 0; }
.rh { grid-column: 1; background: #dedede; border-bottom: 2px solid #cfcfcf; color: #2f7550; font-family: "Liberation Sans", sans-serif; font-size: 66px; line-height: 90px; text-align: center; }
.rh.top { background: #efefef; color: #000; }
.thd { background: #4a525c; color: #fff; font-size: 60px; line-height: 92px; text-align: center; border-right: 2px solid #2e333a; font-family: "Liberation Serif", "Noto Sans CJK SC", serif; font-weight: 300; }
.td { display: flex; align-items: center; justify-content: center; padding-top: 13px; border-bottom: 3px solid #2b2e33; color: #000; font-family: "Liberation Serif", serif; font-size: 60px; letter-spacing: 3px; }
.a-active { background: #d8dde2; }
.a-light { background: #cdcdcd; }
.a-dark { background: #aeb1b4; }
.a-red { background: #c41e0f; color: #5a0905; }
.b-band { background: #d7dce1; }
.b-white { background: #fff; }
.tfoot { background: #4a515b; border-right: 2px solid #2e333a; }
.selection { position: absolute; left: 136px; top: 165px; width: 456px; height: 910px; border: 3px solid #3a7d58; pointer-events: none; }
.handle { position: absolute; right: -6px; bottom: -6px; width: 9px; height: 9px; background: #3a7d58; border: 1px solid #fff; }

.vscroll { flex: 1; padding: 22px 6px 0 3px; background: #e6e6e6; display: flex; flex-direction: column; }
.sb-btn { height: 36px; background: #fff; border: 1px solid #d8d8d8; display: flex; align-items: center; justify-content: center; flex: none; }
.sb-btn.end { margin-top: auto; height: 34px; }
.up-caret { transform: rotate(180deg); }
.sb-thumb { height: 606px; margin-top: 6px; background: #fff; border: 1px solid #d0d0d0; }

/* sheet tabs */
.sheetbar { height: 50px; background: #f0f0f0; border-top: 2px solid #c8c8c8; display: flex; align-items: flex-start; position: relative; }
.sheet-nav { width: 173px; height: 48px; display: flex; align-items: center; padding-left: 45px; gap: 41px; }
.nav-l, .nav-r { display: block; width: 0; height: 0; border-top: 11px solid transparent; border-bottom: 11px solid transparent; }
.nav-l { border-right: 8px solid #ccc; }
.nav-r { border-left: 8px solid #ccc; }
.nav-l.dark { border-right-color: #555; }
.nav-r.dark { border-left-color: #555; }
.s-tab { font-size: 30px; line-height: 32px; height: 38px; margin-top: 4px; color: #555; white-space: nowrap; padding: 0 17px; border-left: 1px solid #aaa; }
.s-tab.current { background: #fff; color: #2f7f55; border-left: 0; height: 44px; margin-top: 0; border-bottom: 4px solid #367e52; padding: 0 17px 0 18px; line-height: 38px; }
.s-add { margin: 9px 0 0 59px; }
.s-dots { width: 4px; height: 32px; margin: 8px 0 0 810px; background: repeating-linear-gradient(to bottom, #aaa 0 4px, transparent 4px 10px); }
.hscroll { width: 1084px; height: 36px; margin: 5px 0 0 27px; display: flex; background: #e4e4e4; border: 1px solid #d8d8d8; flex: none; }
.hs-btn { width: 38px; height: 100%; background: #fff; display: flex; align-items: center; justify-content: center; flex: none; }
.hs-btn.right { margin-left: auto; }
.hs-thumb { width: 882px; background: #fff; border: 1px solid #bbb; }

/* status */
.status { height: 48px; background: #f3f3f3; border-top: 2px solid #dcdcdc; display: flex; align-items: center; color: #666; padding-left: 10px; position: relative; }
.ready { width: 85px; }
.stats { margin-left: 1515px; display: flex; gap: 28px; width: 639px; white-space: nowrap; font-size: 27px; letter-spacing: .9px; }
.stat-count { letter-spacing: 0; }
.view-btns { display: flex; height: 46px; }
.vb { width: 67px; height: 46px; display: flex; align-items: center; justify-content: center; }
.vb.on { background: #d0d0d0; }
.zoom-ctl { display: flex; align-items: center; height: 46px; margin-left: 10px; }
.z-minus { display: block; width: 17px; height: 4px; background: #666; }
.z-track { position: relative; width: 224px; height: 2px; margin-left: 8px; background: #aaa; }
.z-tick { position: absolute; left: 113px; top: -7px; width: 1px; height: 16px; background: #aaa; }
.z-thumb { position: absolute; left: 151px; top: -12px; width: 8px; height: 26px; background: #666; }
.z-plus { margin-left: 7px; font-family: "Liberation Sans", sans-serif; font-size: 36px; line-height: 40px; color: #666; }
.z-val { margin-left: 23px; font-family: "Liberation Sans", sans-serif; font-size: 29px; white-space: nowrap; }

/* overlays on the sheet */
.note-box { position: absolute; left: 1397px; top: 656px; width: 1083px; height: 158px; border: 5px solid #ff3c4c; border-radius: 8px; padding: 30px 0 0 27px; font-family: "Liberation Serif", "Noto Sans CJK SC", serif; font-size: 65.6px; line-height: 80px; color: #000; white-space: nowrap; }
.play { position: absolute; left: 1380px; top: 840px; width: 120px; height: 120px; border-radius: 50%; background: #82868c; display: flex; align-items: center; padding-left: 44px; }
.note-text { position: absolute; left: 1472px; top: 856px; z-index: 2; font-family: "Liberation Sans", sans-serif; font-size: 64px; line-height: 76px; color: #0a0c10; }
.watermark { position: absolute; left: 1753px; top: 1424px; font-family: "Liberation Sans", sans-serif; font-size: 30px; color: #f0f0f0; }

.dialog { position: absolute; z-index: 3; left: 1508px; top: 1038px; width: 1096px; height: 297px; background: #f0f0f0; border: 2px solid #888; box-shadow: 0 8px 20px rgba(0,0,0,.25); display: flex; flex-direction: column; }
.dlg-title { height: 65px; background: #fff; display: flex; align-items: center; padding: 0 40px 0 15px; color: #444; }
.dlg-help { margin-left: auto; margin-right: 80px; font-family: "Liberation Sans", sans-serif; font-size: 30px; }
.dlg-body { padding: 25px 15px 0 10px; }
.dlg-label { height: 27px; line-height: 27px; font-weight: 700; color: #222; margin-left: 4px; white-space: nowrap; }
.dlg-row { display: flex; align-items: center; height: 57px; margin-top: 21px; color: #444; }
.ref-box { height: 55px; border: 5px solid #ff3c4c; border-radius: 9px; background: #fff; display: flex; align-items: stretch; }
.ref-box.first { width: 259px; }
.ref-box.second { width: 261px; }
.ref-text { flex: 1; padding-left: 6px; font-family: "Liberation Sans", sans-serif; font-size: 29px; line-height: 44px; color: #222; white-space: nowrap; }
.ref-btn { width: 40px; background: #e1e1e1; display: flex; align-items: center; justify-content: center; flex: none; }
.dlg-to { margin: 0 24px 0 21px; }
.dlg-set { margin: 0 22px 0 16px; white-space: nowrap; }
.dlg-select { width: 357px; height: 48px; background: #fff; border: 2px solid #ccc; display: flex; padding: 3px; }
.sel-text { flex: 1; background: #a6cdee; border: 1px dotted #444; line-height: 36px; color: #222; padding-left: 2px; }
.sel-drop { width: 36px; margin-left: 3px; background: #e4e4e4; border: 1px solid #bbb; display: flex; align-items: center; justify-content: center; }
.dlg-actions { display: flex; justify-content: flex-end; gap: 24px; margin-top: 20px; }
.btn { width: 167px; height: 60px; background: #e1e1e1; border: 2px solid #bbb; text-align: center; line-height: 54px; color: #222; }
.btn.primary { background: #e5f1fb; border-color: #4a8cc0; }

.red-arrow { position: absolute; z-index: 4; left: 1600px; top: 800px; }
.cursor { position: absolute; z-index: 5; left: 2330px; top: 1286px; }

.logo { position: absolute; z-index: 6; left: 2443px; top: 1486px; width: 377px; }
.logo-top { display: flex; height: 84px; justify-content: space-between; }
.logo-wm { font-size: 94px; font-weight: 700; line-height: 84px; color: #3a9be0; letter-spacing: 2px; white-space: nowrap; }
.logo-uni { width: 171px; height: 84px; border-radius: 10px; background: #3a9be0; color: #fff; font-size: 76px; font-weight: 700; line-height: 82px; text-align: center; white-space: nowrap; }
.logo-search { margin-top: 22px; height: 57px; border: 3px solid #3a9be0; border-radius: 6px; display: flex; }
.logo-url { flex: 1; padding: 0 0 0 9px; font-family: "DejaVu Sans", sans-serif; font-weight: 700; font-size: 37px; line-height: 50px; color: #3a9be0; white-space: nowrap; }
.logo-btn { width: 76px; background: #3a9be0; display: flex; align-items: center; justify-content: center; }
```
